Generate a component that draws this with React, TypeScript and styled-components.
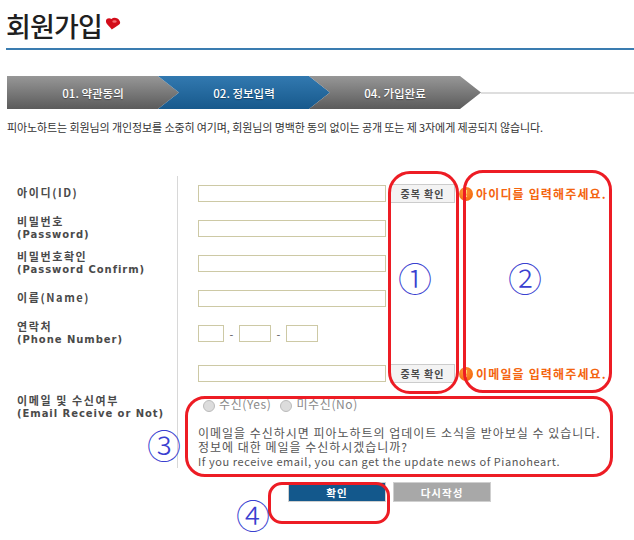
import React from "react";
import styled, {createGlobalStyle} from "styled-components";

const KR = `"Noto Sans CJK KR", "DejaVu Sans", sans-serif`;
const LABEL = `"DejaVu Sans", "Noto Sans CJK KR", sans-serif`;

const GlobalStyle = createGlobalStyle`
    html, body {
        margin: 0;
        padding: 0;
        background: #fff;
    }
`;

const Page = styled.div`
    position: relative;
    width: 634px;
    height: 540px;
    overflow: hidden;
    font-family: ${KR};
`;

const Header = styled.div`
    display: flex;
    align-items: flex-start;
    height: 38px;
    margin-left: 6px;
    padding-top: 10px;
    border-bottom: 2px solid #3a7cb0;
`;

const Title = styled.h1`
    margin: 0;
    font-size: 27px;
    line-height: 32px;
    font-weight: 500;
    letter-spacing: -0.8px;
    color: #1f1f1f;
`;

const Heart = styled.svg`
    width: 16px;
    height: 13px;
    margin: 7px 0 0 3px;
`;

const Steps = styled.div`
    display: flex;
    align-items: center;
    margin: 26px 0 0 7px;
`;

const Step = styled.div<{$active?: boolean; $first?: boolean}>`
    display: flex;
    align-items: center;
    justify-content: center;
    width: 172px;
    height: 33px;
    margin-left: ${p => (p.$first ? "0" : "-21px")};
    flex: none;
    font-size: 11.5px;
    font-weight: 500;
    color: #fff;
    text-shadow: 0 1px 1px rgba(0, 0, 0, 0.35);
    background: ${p => (p.$active
        ? "linear-gradient(#3279b0, #17598c)"
        : "linear-gradient(#979797, #5b5b5b)")};
    clip-path: ${p => (p.$first
        ? "polygon(0 0, 151px 0, 100% 50%, 151px 100%, 0 100%)"
        : "polygon(0 0, 151px 0, 100% 50%, 151px 100%, 0 100%, 21px 50%)")};
`;

const StepLine = styled.div`
    flex: 1;
    height: 2px;
    background: #dedede;
`;

const Intro = styled.p`
    margin: 10px 0 0 7px;
    font-size: 11px;
    line-height: 16px;
    letter-spacing: -0.1px;
    color: #333;
    white-space: nowrap;
`;

const Form = styled.div`
    margin-top: 41px;
`;

const Row = styled.div<{$height: number}>`
    display: flex;
    height: ${p => p.$height}px;
    align-items: stretch;
`;

const LabelCell = styled.div<{$top?: boolean}>`
    display: flex;
    flex-direction: column;
    justify-content: ${p => (p.$top ? "flex-start" : "center")};
    width: 160px;
    margin: -2px 0 0 17px;
    flex: none;
    font-family: ${LABEL};
    font-size: 10px;
    line-height: 13px;
    font-weight: 700;
    letter-spacing: 0.95px;
    color: #4a4a4a;
    white-space: nowrap;
`;

const LabelKorean = styled.span`
    font-family: ${KR};
    font-size: 11px;
    font-weight: 700;
    letter-spacing: 1.6px;
`;

const FieldCell = styled.div`
    display: flex;
    align-items: center;
    flex: 1;
    padding-left: 20px;
    border-left: 1px solid #d8d8d8;
`;

const TextInput = styled.div<{$width: number}>`
    box-sizing: border-box;
    width: ${p => p.$width}px;
    height: 17px;
    flex: none;
    border: 1px solid #cdc9a5;
    background: #fff;
`;

const Dash = styled.span`
    width: 15px;
    flex: none;
    text-align: center;
    font-size: 11px;
    color: #555;
`;

const CheckButton = styled.div`
    display: flex;
    align-items: center;
    justify-content: center;
    box-sizing: border-box;
    width: 65px;
    height: 19px;
    margin-left: 4px;
    flex: none;
    border: 1px solid #cccccc;
    background: #f3f3f3;
    font-size: 10px;
    font-weight: 700;
    letter-spacing: 1px;
    color: #4a4a4a;
`;

const Notice = styled.div`
    display: flex;
    align-items: center;
    margin-left: 4px;
    font-size: 12px;
    font-weight: 700;
    letter-spacing: 1.15px;
    color: #f4640e;
    white-space: nowrap;
`;

const NoticeDot = styled.span`
    display: flex;
    align-items: center;
    justify-content: center;
    width: 14px;
    height: 14px;
    margin-right: 3px;
    border-radius: 50%;
    background: radial-gradient(circle at 40% 35%, #ff9a3c, #f05a00);
    font-size: 9px;
    line-height: 1;
    font-weight: 700;
    letter-spacing: 0;
    color: #fff;
`;

const ReceiveCell = styled(FieldCell)`
    flex-direction: column;
    align-items: flex-start;
`;

const RadioRow = styled.div`
    display: flex;
    align-items: center;
    height: 17px;
    padding-left: 5px;
    margin-top: -1px;
    font-size: 12px;
    letter-spacing: 0.6px;
    color: #8a8a8a;
    white-space: nowrap;
`;

const Radio = styled.span<{$gap?: number}>`
    box-sizing: border-box;
    width: 12px;
    height: 12px;
    margin: 5px 4px 0 ${p => p.$gap || 0}px;
    border: 1px solid #bbb;
    border-radius: 50%;
    background: #dcdcdc;
`;

const Description = styled.div`
    margin-top: 14px;
    color: #555;
    white-space: nowrap;
`;

const DescriptionLine = styled.div<{$latin?: boolean}>`
    height: 14px;
    font-size: ${p => (p.$latin ? "11px" : "12px")};
    line-height: 14px;
    letter-spacing: ${p => (p.$latin ? "0.58px" : "0.98px")};
`;

const Actions = styled.div`
    display: flex;
    gap: 7px;
    margin: 14px 0 0 288px;
`;

const ActionButton = styled.div<{$primary?: boolean}>`
    display: flex;
    align-items: center;
    justify-content: center;
    box-sizing: border-box;
    width: 98px;
    height: 20px;
    border: 1px solid #cfcfcf;
    background: ${p => (p.$primary ? "#13588c" : "#a8a8a8")};
    font-size: 10.5px;
    font-weight: 700;
    letter-spacing: 1px;
    color: #fff;
`;

// hand-drawn red callouts lying over the form
const Callout = styled.div<{$x: number; $y: number; $w: number; $h: number; $r: number}>`
    position: absolute;
    left: ${p => p.$x}px;
    top: ${p => p.$y}px;
    box-sizing: border-box;
    width: ${p => p.$w}px;
    height: ${p => p.$h}px;
    border: 3px solid #ed1c24;
    border-radius: ${p => p.$r}px;
    pointer-events: none;
`;

const CalloutNumber = styled.span<{$x: number; $y: number}>`
    position: absolute;
    left: ${p => p.$x}px;
    top: ${p => p.$y}px;
    width: 36px;
    height: 36px;
    font-family: ${KR};
    font-size: 34px;
    font-weight: 300;
    line-height: 36px;
    text-align: center;
    color: #3a3fd0;
`;

const fields = [
    {korean: "아이디(ID)", check: "아이디를 입력해주세요."},
    {korean: "비밀번호", latin: "(Password)"},
    {korean: "비밀번호확인", latin: "(Password Confirm)"},
    {korean: "이름(Name)"},
];

export default function App() {
    return (
        <Page>
            <GlobalStyle/>
            <Header>
                <Title>회원가입</Title>
                <Heart viewBox="0 0 16 13">
                    <path d="M1 3.5C1.5 1 4.5 0.5 6.5 2C8.5 0 13 0.5 14.8 4.2C15.6 6 15 7 13.5 8C11 9.8 8.5 11.5 6.8 12.4C5.5 10.5 3 8.5 1.6 6.5C1 5.5 0.8 4.5 1 3.5Z" fill="#d30d1a"/>
                    <ellipse cx="9.5" cy="4.5" rx="2.2" ry="1.2" fill="#f56a70"/>
                </Heart>
            </Header>
            <Steps>
                <Step $first>01. 약관동의</Step>
                <Step $active>02. 정보입력</Step>
                <Step>04. 가입완료</Step>
                <StepLine/>
            </Steps>
            <Intro>피아노하트는 회원님의 개인정보를 소중히 여기며, 회원님의 명백한 동의 없이는 공개 또는 제 3자에게 제공되지 않습니다.</Intro>
            <Form>
                {fields.map((field, idx) => (
                    <Row key={idx} $height={35}>
                        <LabelCell>
                            <LabelKorean>{field.korean}</LabelKorean>
                            {field.latin && <span>{field.latin}</span>}
                        </LabelCell>
                        <FieldCell>
                            <TextInput $width={188}/>
                            {field.check && (
                                <>
                                    <CheckButton>중복 확인</CheckButton>
                                    <Notice><NoticeDot>!</NoticeDot>{field.check}</Notice>
                                </>
                            )}
                        </FieldCell>
                    </Row>
                ))}
                <Row $height={35}>
                    <LabelCell>
                        <LabelKorean>연락처</LabelKorean>
                        <span>(Phone Number)</span>
                    </LabelCell>
                    <FieldCell>
                        <TextInput $width={26}/>
                        <Dash>-</Dash>
                        <TextInput $width={32}/>
                        <Dash>-</Dash>
                        <TextInput $width={32}/>
                    </FieldCell>
                </Row>
                <Row $height={45}>
                    <LabelCell/>
                    <FieldCell>
                        <TextInput $width={188}/>
                        <CheckButton>중복 확인</CheckButton>
                        <Notice><NoticeDot>!</NoticeDot>이메일을 입력해주세요.</Notice>
                    </FieldCell>
                </Row>
                <Row $height={72}>
                    <LabelCell $top>
                        <LabelKorean>이메일 및 수신여부</LabelKorean>
                        <span>(Email Receive or Not)</span>
                    </LabelCell>
                    <ReceiveCell>
                        <RadioRow>
                            <Radio/>수신(Yes)
                            <Radio $gap={9}/>미수신(No)
                        </RadioRow>
                        <Description>
                            <DescriptionLine>이메일을 수신하시면 피아노하트의 업데이트 소식을 받아보실 수 있습니다.</DescriptionLine>
                            <DescriptionLine>정보에 대한 메일을 수신하시겠습니까?</DescriptionLine>
                            <DescriptionLine $latin>If you receive email, you can get the update news of Pianoheart.</DescriptionLine>
                        </Description>
                    </ReceiveCell>
                </Row>
            </Form>
            <Actions>
                <ActionButton $primary>확인</ActionButton>
                <ActionButton>다시작성</ActionButton>
            </Actions>

            <Callout $x={388} $y={171} $w={71} $h={223} $r={22}/>
            <Callout $x={463} $y={170} $w={149} $h={223} $r={20}/>
            <Callout $x={185} $y={396} $w={428} $h={81} $r={20}/>
            <Callout $x={268} $y={482} $w={122} $h={42} $r={14}/>
            <CalloutNumber $x={397} $y={260}>①</CalloutNumber>
            <CalloutNumber $x={507} $y={260}>②</CalloutNumber>
            <CalloutNumber $x={146} $y={427}>③</CalloutNumber>
            <CalloutNumber $x={235} $y={497}>④</CalloutNumber>
        </Page>
    );
}
